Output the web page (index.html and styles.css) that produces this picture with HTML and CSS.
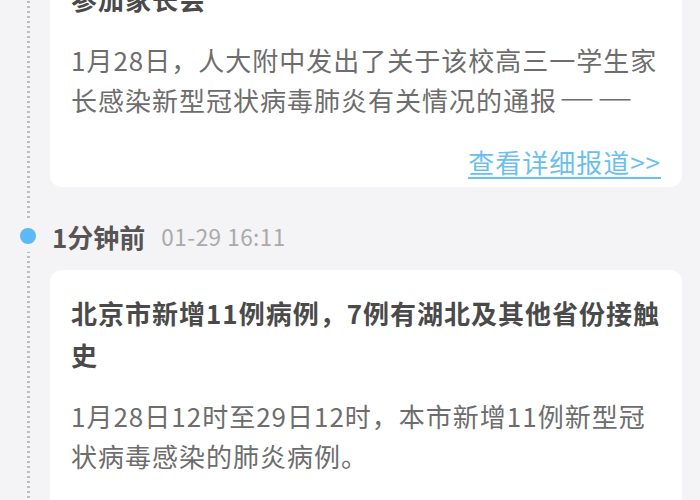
FILE: index.html
```html
<!DOCTYPE html>
<html lang="zh-CN">
<head>
<meta charset="utf-8">
<title>实时动态</title>
<link rel="stylesheet" href="styles.css">
</head>
<body>
<div class="feed">
  <div class="card">
    <div class="card-title">参加家长会</div>
    <div class="card-body">1月28日，人大附中发出了关于该校高三一学生家长感染新型冠状病毒肺炎有关情况的通报<span class="dash">—</span><span class="dash">—</span></div>
    <div class="card-more"><a class="more-link" href="#">查看详细报道&gt;&gt;</a></div>
  </div>

  <div class="time-row">
    <span class="dot"></span>
    <span class="ago">1分钟前</span>
    <span class="stamp">01-29 16:11</span>
  </div>

  <div class="card card-last">
    <div class="card-title">北京市新增11例病例，7例有湖北及其他省份接触史</div>
    <div class="card-body">1月28日12时至29日12时，本市新增11例新型冠状病毒感染的肺炎病例。</div>
  </div>
</div>
</body>
</html>
```

FILE: styles.css
```css
html, body {
  margin: 0;
  padding: 0;
  background: #f4f3f6;
  height: 100%;
  overflow: hidden;
}

body {
  font-family: "Noto Sans CJK SC", "Noto Sans", sans-serif;
}

.feed {
  position: relative;
  margin-top: -44px;
  padding: 0 18px 40px 50px;
}

.feed::before {
  content: "";
  position: absolute;
  left: 27px;
  top: 0;
  bottom: 0;
  width: 3px;
  background: repeating-linear-gradient(to bottom, #bdbdc0 0, #bdbdc0 2.5px, transparent 2.5px, transparent 5px);
}

.card {
  background: #ffffff;
  border-radius: 12px;
  padding: 22px 21px 7px;
}

.card-last {
  padding-bottom: 60px;
}

.card-title {
  font-size: 26px;
  line-height: 42px;
  font-weight: 600;
  color: #4a4a4a;
  letter-spacing: 1px;
}

.card-body {
  margin-top: 20px;
  font-size: 26px;
  line-height: 40px;
  color: #6d6d6d;
  letter-spacing: 1px;
}

.dash {
  font-size: 36px;
  line-height: 1;
  vertical-align: -3px;
  letter-spacing: 0;
  margin-left: 2px;
}

.card-more {
  margin-top: 24px;
  text-align: right;
  font-size: 26px;
  line-height: 36px;
}

.more-link {
  color: #6bbfee;
  letter-spacing: 1px;
  text-decoration: underline;
  text-underline-offset: 4px;
  text-decoration-thickness: 1.5px;
}

.time-row {
  position: relative;
  display: flex;
  align-items: center;
  height: 40px;
  margin: 29px 0 14px;
}

.dot {
  position: absolute;
  left: -30px;
  top: 12px;
  width: 16px;
  height: 16px;
  border-radius: 50%;
  background: #5bb9f3;
  box-shadow: 0 0 0 8px #f4f3f6;
}

.ago {
  margin-left: 2px;
  font-size: 26px;
  font-weight: 600;
  color: #555555;
}

.stamp {
  margin-left: 16px;
  font-size: 22.5px;
  letter-spacing: 0.5px;
  color: #aaaaaa;
}
```
